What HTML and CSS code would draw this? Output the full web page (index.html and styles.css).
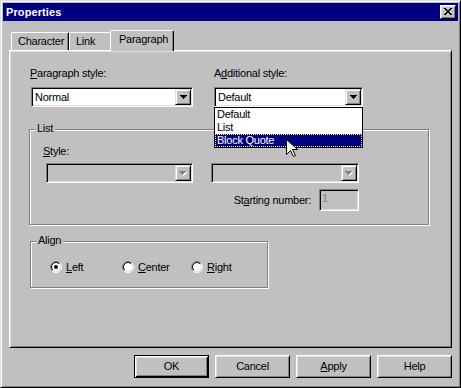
FILE: index.html
```html
<!DOCTYPE html>
<html>
<head>
<meta charset="utf-8">
<title>Properties</title>
<link rel="stylesheet" href="styles.css">
</head>
<body>
<div class="window">
  <div class="titlebar">
    <span class="title">Properties</span>
    <span class="close"><svg width="8" height="7" viewBox="0 0 8 7" shape-rendering="crispEdges"><path d="M0 0h2v1H0z M6 0h2v1H6z M1 1h2v1H1z M5 1h2v1H5z M2 2h4v1H2z M3 3h2v1H3z M2 4h4v1H2z M1 5h2v1H1z M5 5h2v1H5z M0 6h2v1H0z M6 6h2v1H6z" fill="#000"/></svg></span>
  </div>

  <div class="tabstrip">
    <div class="tab tab-char">Character</div>
    <div class="tab tab-link">Link</div>
    <div class="tab tab-active">Paragraph</div>
  </div>

  <div class="panel">
    <div class="row-top">
      <div class="field">
        <div class="label"><u>P</u>aragraph style:</div>
        <div class="combo combo-para">
          <span class="combo-text">Normal</span>
          <span class="dropbtn"><svg width="7" height="4" viewBox="0 0 7 4" shape-rendering="crispEdges"><path d="M0 0h7v1H0z M1 1h5v1H1z M2 2h3v1H2z M3 3h1v1H3z" fill="#000"/></svg></span>
        </div>
      </div>
      <div class="field">
        <div class="label">A<u>d</u>ditional style:</div>
        <div class="combo combo-add">
          <span class="combo-text">Default</span>
          <span class="dropbtn"><svg width="7" height="4" viewBox="0 0 7 4" shape-rendering="crispEdges"><path d="M0 0h7v1H0z M1 1h5v1H1z M2 2h3v1H2z M3 3h1v1H3z" fill="#000"/></svg></span>
        </div>
        <ul class="droplist">
          <li>Default</li>
          <li>List</li>
          <li class="sel">Block Quote</li>
          <svg class="cursor" width="13" height="19" viewBox="0 0 13 19" shape-rendering="crispEdges"><path d="M0.5 0.5V15.5L4.5 11.5L7.5 17.5L9.5 16.5L6.5 10.5H11.5Z" fill="#fff" stroke="#000" stroke-width="1" shape-rendering="auto"/></svg>
        </ul>
      </div>
    </div>

    <div class="group group-list">
      <span class="legend">List</span>
      <div class="label list-label"><u>S</u>tyle:</div>
      <div class="list-combos">
        <div class="combo combo-disabled combo-l1">
          <span class="combo-text"></span>
          <span class="dropbtn"><svg width="8" height="5" viewBox="0 0 8 5" shape-rendering="crispEdges"><path d="M1 1h7v1H1z M2 2h5v1H2z M3 3h3v1H3z M4 4h1v1H4z" fill="#fff"/><path d="M0 0h7v1H0z M1 1h5v1H1z M2 2h3v1H2z M3 3h1v1H3z" fill="#808080"/></svg></span>
        </div>
        <div class="combo combo-disabled combo-l2">
          <span class="combo-text"></span>
          <span class="dropbtn"><svg width="8" height="5" viewBox="0 0 8 5" shape-rendering="crispEdges"><path d="M1 1h7v1H1z M2 2h5v1H2z M3 3h3v1H3z M4 4h1v1H4z" fill="#fff"/><path d="M0 0h7v1H0z M1 1h5v1H1z M2 2h3v1H2z M3 3h1v1H3z" fill="#808080"/></svg></span>
        </div>
      </div>
      <div class="start-row">
        <span class="label">St<u>a</u>rting number:</span>
        <div class="numbox">1</div>
      </div>
    </div>

    <div class="group group-align">
      <span class="legend">Align</span>
      <div class="radios">
        <label class="radio r-left">
          <svg width="12" height="12" viewBox="0 0 12 12">
            <defs>
              <linearGradient id="rOuter" x1="0" y1="0" x2="1" y2="1">
                <stop offset="0" stop-color="#808080"/><stop offset="0.5" stop-color="#808080"/>
                <stop offset="0.5" stop-color="#ffffff"/><stop offset="1" stop-color="#ffffff"/>
              </linearGradient>
              <linearGradient id="rInner" x1="0" y1="0" x2="1" y2="1">
                <stop offset="0" stop-color="#000"/><stop offset="0.5" stop-color="#000"/>
                <stop offset="0.5" stop-color="#dfdfdf"/><stop offset="1" stop-color="#dfdfdf"/>
              </linearGradient>
            </defs>
            <circle cx="6" cy="6" r="5.5" fill="none" stroke="url(#rOuter)"/>
            <circle cx="6" cy="6" r="4.5" fill="#fff" stroke="url(#rInner)"/>
            <circle cx="6" cy="6" r="2" fill="#000"/>
          </svg>
          <span><u>L</u>eft</span>
        </label>
        <label class="radio r-center">
          <svg width="12" height="12" viewBox="0 0 12 12">
            <circle cx="6" cy="6" r="5.5" fill="none" stroke="url(#rOuter)"/>
            <circle cx="6" cy="6" r="4.5" fill="#fff" stroke="url(#rInner)"/>
          </svg>
          <span><u>C</u>enter</span>
        </label>
        <label class="radio r-right">
          <svg width="12" height="12" viewBox="0 0 12 12">
            <circle cx="6" cy="6" r="5.5" fill="none" stroke="url(#rOuter)"/>
            <circle cx="6" cy="6" r="4.5" fill="#fff" stroke="url(#rInner)"/>
          </svg>
          <span><u>R</u>ight</span>
        </label>
      </div>
    </div>
  </div>

  <div class="buttons">
    <div class="btn btn-default">OK</div>
    <div class="btn">Cancel</div>
    <div class="btn"><u>A</u>pply</div>
    <div class="btn">Help</div>
  </div>
</div>
</body>
</html>
```
FILE: styles.css
```css
* { box-sizing: border-box; }
html, body { margin: 0; padding: 0; background: #c0c0c0; }
body {
  font-family: "Liberation Sans", Arial, sans-serif;
  font-size: 11px;
  line-height: 13px;
  color: #000;
  letter-spacing: -0.25px;
}
u { text-decoration: underline; text-underline-offset: 1px; }

.window {
  width: 461px;
  height: 388px;
  padding: 2px;
  border: 1px solid;
  border-color: #dfdfdf #000 #000 #dfdfdf;
  box-shadow: inset 1px 1px #fff, inset -1px -1px #808080;
  background: #c0c0c0;
}

.titlebar {
  height: 18px;
  background: #000080;
  color: #fff;
  display: flex;
  align-items: center;
  justify-content: space-between;
  padding: 0 2px 0 3px;
  font-weight: bold;
  letter-spacing: 0.1px;
  line-height: 18px;
}
.close {
  width: 16px;
  height: 14px;
  background: #c0c0c0;
  border: 1px solid;
  border-color: #fff #000 #000 #fff;
  box-shadow: inset 1px 1px #dfdfdf, inset -1px -1px #808080;
  display: flex;
  align-items: center;
  justify-content: center;
  padding-bottom: 1px;
}
.close svg { display: block; }

.tabstrip {
  display: flex;
  align-items: flex-end;
  height: 20px;
  margin: 9px 0 0 8px;
  position: relative;
  z-index: 1;
}
.tab {
  height: 18px;
  padding: 2px 0 0 6px;
  border: 1px solid;
  border-bottom: none;
  border-color: #fff #000 transparent #fff;
  border-radius: 2px 2px 0 0;
  box-shadow: inset -1px 0 #808080;
  background: #c0c0c0;
  white-space: nowrap;
}
.tab-char { width: 58px; }
.tab-link { width: 43px; }
.tab-active {
  width: 64px;
  height: 21px;
  margin: 0 0 -1px -2px;
  padding: 2px 0 0 8px;
}

.panel {
  margin: 0 6px;
  height: 298px;
  border: 1px solid;
  border-color: #fff #000 #000 #fff;
  box-shadow: inset 1px 1px #dfdfdf, inset -1px -1px #808080;
  padding: 16px 0 0 20px;
}

.label { display: block; height: 13px; white-space: nowrap; }

.row-top {
  display: grid;
  grid-template-columns: 163px 149px;
  column-gap: 21px;
}
.field { position: relative; }
.field > .label { margin-bottom: 7px; }

.combo {
  display: flex;
  height: 20px;
  border: 1px solid;
  border-color: #808080 #fff #fff #808080;
  box-shadow: inset 1px 1px #000, inset -1px -1px #dfdfdf;
  padding: 1px;
  background: #fff;
}
.combo-para { width: 162px; margin-left: 1px; }
.combo-add { width: 149px; }
.combo-text {
  flex: 1;
  padding-left: 2px;
  line-height: 16px;
  white-space: nowrap;
}
.dropbtn {
  width: 16px;
  height: 16px;
  display: flex;
  align-items: center;
  justify-content: center;
  background: #c0c0c0;
  border: 1px solid;
  border-color: #dfdfdf #000 #000 #dfdfdf;
  box-shadow: inset 1px 1px #fff, inset -1px -1px #808080;
}
.dropbtn svg { display: block; }
.combo-disabled { background: #c0c0c0; }

.droplist {
  position: absolute;
  left: 0;
  top: 100%;
  width: 149px;
  margin: 0;
  padding: 0;
  list-style: none;
  border: 1px solid #000;
  background: #fff;
  z-index: 5;
}
.droplist li {
  height: 13px;
  line-height: 13px;
  padding-left: 2px;
  white-space: nowrap;
}
.droplist li.sel {
  background: #000080;
  color: #fff;
  outline: 1px dotted #ffff80;
  outline-offset: -1px;
}
.cursor {
  position: absolute;
  left: 71px;
  top: 31px;
  display: block;
}

.group {
  position: relative;
  border: 1px solid #808080;
  box-shadow: inset 1px 1px #fff, 1px 1px #fff;
}
.legend {
  position: absolute;
  top: -8px;
  left: 5px;
  padding: 0 2px;
  background: #c0c0c0;
  line-height: 13px;
}
.group-list {
  width: 400px;
  margin: 22px 0 0 -1px;
  padding: 15px 69px 13px 13px;
}
.list-label { margin-bottom: 5px; }
.list-combos {
  display: flex;
  gap: 18px;
  margin-left: 3px;
}
.combo-l1 { width: 147px; }
.combo-l2 { width: 148px; }
.start-row {
  display: flex;
  justify-content: flex-end;
  align-items: center;
  gap: 8px;
  margin-top: 6px;
}
.numbox {
  width: 40px;
  height: 22px;
  border: 1px solid;
  border-color: #808080 #fff #fff #808080;
  box-shadow: inset 1px 1px #000, inset -1px -1px #dfdfdf;
  background: #c0c0c0;
  color: #808080;
  padding: 2px 0 0 2px;
  line-height: 13px;
}

.group-align {
  width: 238px;
  height: 47px;
  margin-top: 16px;
  padding: 19px 0 0 19px;
}
.radios { display: flex; }
.radio {
  display: flex;
  align-items: center;
  gap: 4px;
  height: 12px;
  white-space: nowrap;
}
.radio svg { display: block; flex: none; }
.r-left { width: 72px; }
.r-center { width: 69px; }

.buttons {
  display: flex;
  justify-content: flex-end;
  gap: 6px;
  margin-top: 7px;
  padding-right: 6px;
}
.btn {
  width: 75px;
  height: 23px;
  line-height: 21px;
  text-align: center;
  border: 1px solid;
  border-color: #fff #000 #000 #fff;
  box-shadow: inset 1px 1px #dfdfdf, inset -1px -1px #808080;
  background: #c0c0c0;
}
.btn-default {
  border-color: #000;
  box-shadow: inset 1px 1px #fff, inset -1px -1px #000, inset 2px 2px #dfdfdf, inset -2px -2px #808080;
}
```
